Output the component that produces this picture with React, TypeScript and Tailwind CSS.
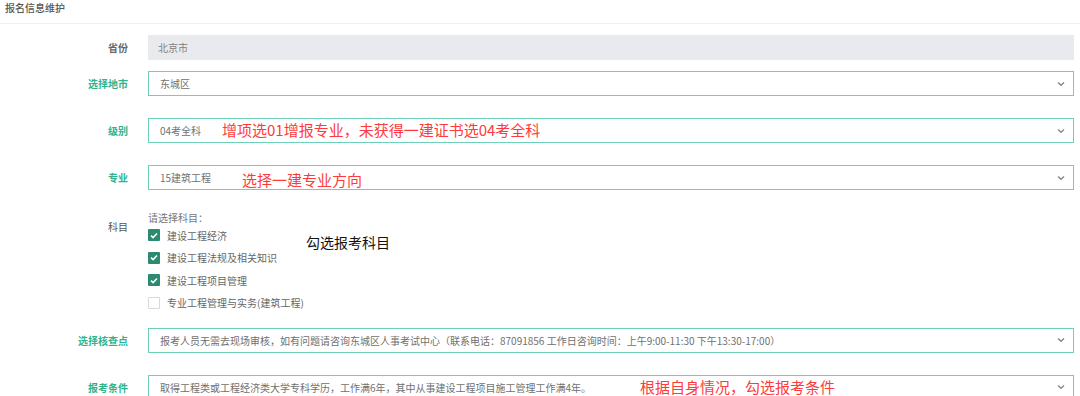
import React from 'react'

const font = { fontFamily: '"Noto Sans CJK SC", "Noto Sans", sans-serif' }

function Chevron() {
  return (
    <svg width="8" height="6" viewBox="0 0 8 6" className="shrink-0">
      <path d="M1 1.5 L4 4.3 L7 1.5" fill="none" stroke="#8a8a8a" strokeWidth="1.5" />
    </svg>
  )
}

function SelectBox({ value, children }: { value: string; children?: React.ReactNode }) {
  return (
    <div className="relative flex h-[25px] w-[926px] items-center justify-between border border-[#6fd0b8] bg-white pl-[11px] pr-[8px]">
      <span className="text-[10px] text-[#707070] whitespace-nowrap">{value}</span>
      <Chevron />
      {children}
    </div>
  )
}

function Label({ text, green = true }: { text: string; green?: boolean }) {
  return (
    <div
      className={`mr-[20px] w-[128px] shrink-0 text-right text-[10px] font-semibold ${
        green ? 'text-[#2fb28d]' : 'text-[#666]'
      }`}
    >
      {text}
    </div>
  )
}

function Check({ checked, label }: { checked: boolean; label: string }) {
  return (
    <div className="flex h-[12px] items-center gap-[7px]">
      {checked ? (
        <span className="flex h-[12px] w-[12px] items-center justify-center rounded-[1px] bg-[#2b8a70]">
          <svg width="8" height="7" viewBox="0 0 8 7">
            <path d="M1 3.6 L3.1 5.6 L7 1.4" fill="none" stroke="#fff" strokeWidth="1.5" />
          </svg>
        </span>
      ) : (
        <span className="h-[12px] w-[12px] rounded-[1px] border border-[#d8d8d8] bg-white" />
      )}
      <span className="text-[10px] text-[#666] whitespace-nowrap">{label}</span>
    </div>
  )
}

export default function App() {
  return (
    <div className="relative h-[396px] w-[1080px] overflow-hidden bg-white" style={font}>
      <div className="h-[24px] border-b border-[#f0f0f0] px-[5px] text-[10px] font-medium text-[#555]">
        报名信息维护
      </div>

      <div className="flex flex-col pt-[11px]">
        <div className="flex items-center">
          <Label text="省份" green={false} />
          <div className="flex h-[25px] w-[926px] items-center bg-[#e8eaed] pl-[10px] text-[10px] text-[#808080]">
            北京市
          </div>
        </div>

        <div className="mt-[11px] flex items-center">
          <Label text="选择地市" />
          <SelectBox value="东城区" />
        </div>

        <div className="mt-[22px] flex items-center">
          <Label text="级别" />
          <SelectBox value="04考全科">
            <span className="absolute left-[73px] top-[1px] text-[15px] leading-[20px] text-[#ff3a3a] whitespace-nowrap">
              增项选01增报专业，未获得一建证书选04考全科
            </span>
          </SelectBox>
        </div>

        <div className="mt-[22px] flex items-center">
          <Label text="专业" />
          <SelectBox value="15建筑工程">
            <span className="absolute left-[93px] top-[4px] text-[15px] leading-[20px] text-[#ff3a3a] whitespace-nowrap">
              选择一建专业方向
            </span>
          </SelectBox>
        </div>

        <div className="mt-[22px] flex items-start">
          <div className="mr-[20px] w-[128px] shrink-0 pt-[7px] text-right text-[10px] text-[#555]">科目</div>
          <div className="relative flex flex-col">
            <div className="h-[12px] text-[10px] leading-[12px] text-[#777]">请选择科目：</div>
            <div className="mt-[5px] flex flex-col gap-[10.5px]">
              <Check checked label="建设工程经济" />
              <Check checked label="建设工程法规及相关知识" />
              <Check checked label="建设工程项目管理" />
              <Check checked={false} label="专业工程管理与实务(建筑工程)" />
            </div>
            <span className="absolute left-[158px] top-[21px] text-[14px] leading-[18px] text-[#111] whitespace-nowrap">
              勾选报考科目
            </span>
          </div>
        </div>

        <div className="mt-[19px] flex items-center">
          <Label text="选择核查点" />
          <SelectBox value="报考人员无需去现场审核，如有问题请咨询东城区人事考试中心（联系电话：87091856 工作日咨询时间：上午9:00-11:30 下午13:30-17:00）" />
        </div>

        <div className="mt-[22px] flex items-center">
          <Label text="报考条件" />
          <SelectBox value="取得工程类或工程经济类大学专科学历，工作满6年，其中从事建设工程项目施工管理工作满4年。">
            <span className="absolute left-[491px] top-[1px] text-[15px] leading-[20px] text-[#ff3a3a] whitespace-nowrap">
              根据自身情况，勾选报考条件
            </span>
          </SelectBox>
        </div>
      </div>
    </div>
  )
}
